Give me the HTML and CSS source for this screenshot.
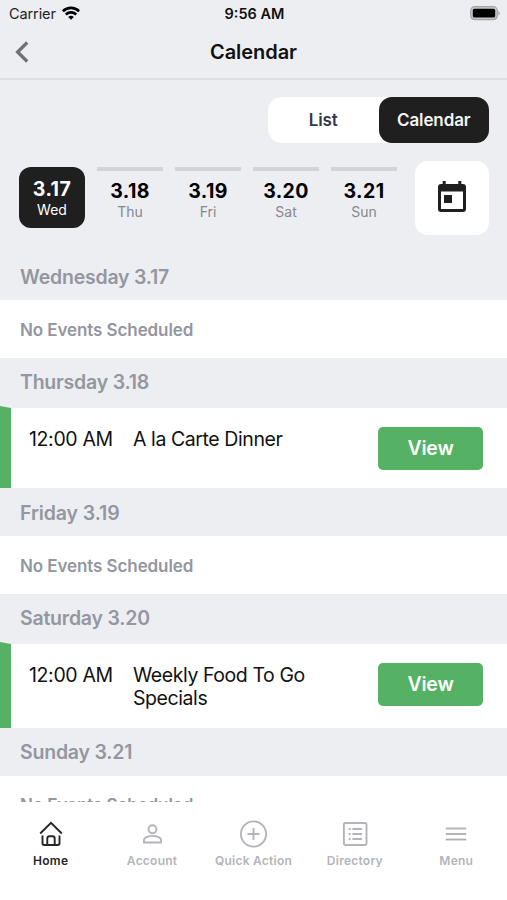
FILE: index.html
```html
<!DOCTYPE html>
<html lang="en">
<head>
<meta charset="utf-8">
<title>Calendar</title>
<link rel="stylesheet" href="styles.css">
</head>
<body>
<div class="app">
  <div class="status">
    <div class="status-left"><span class="carrier">Carrier</span>
      <svg class="wifi" width="18" height="14" viewBox="0 0 18 14" fill="none" stroke="#000" stroke-width="2.6"><path d="M.9 5.200a11.600 11.600 0 0 1 16.200 0"/><path d="M3.800 8.500a7.500 7.500 0 0 1 10.400 0"/><path d="M9 13.800 6.200 11a4 4 0 0 1 5.600 0Z" fill="#000" stroke="none"/></svg>
    </div>
    <span class="clock">9:56 AM</span>
    <svg class="battery" width="30" height="15" viewBox="0 0 30 15"><rect x=".7" y=".7" width="26.600" height="13" rx="4" fill="#c9c9cc" stroke="#a5a5a8" stroke-width="1.200"/><rect x="2.800" y="2.800" width="22.400" height="8.800" rx="1.600" fill="#000"/><path d="M28.400 5v4.600q1.400-.8 1.400-2.300T28.400 5Z" fill="#a5a5a8"/></svg>
  </div>
  <header class="titlebar">
    <svg class="back" width="14" height="22" viewBox="0 0 14 22" fill="none" stroke="#717174" stroke-width="3.300"><path d="M12.200 1.500 2.600 11l9.600 9.500"/></svg>
    <h1>Calendar</h1>
  </header>
  <div class="controls">
    <div class="segment"><span class="seg">List</span><span class="seg seg-on">Calendar</span></div>
    <div class="days">
      <div class="day day-on"><b>3.17</b><span>Wed</span></div>
      <div class="day"><b>3.18</b><span>Thu</span></div>
      <div class="day"><b>3.19</b><span>Fri</span></div>
      <div class="day"><b>3.20</b><span>Sat</span></div>
      <div class="day"><b>3.21</b><span>Sun</span></div>
      <div class="picker"><svg width="28" height="31" viewBox="0 0 28 31" fill="#1f1f20"><path fill-rule="evenodd" d="M3 3H4.700V0H7.700V3H20.300V0H23.300V3H25A3 3 0 0 1 28 6V28A3 3 0 0 1 25 31H3A3 3 0 0 1 0 28V6A3 3 0 0 1 3 3ZM3 10.500V28H25V10.500Z"/><path d="M6 14h8v8H6z"/></svg></div>
    </div>
  </div>
  <main class="agenda">
    <h2 class="h-wed">Wednesday 3.17</h2>
    <div class="empty">No Events Scheduled</div>
    <h2 class="h-thu">Thursday 3.18</h2>
    <div class="event"><span class="time">12:00 AM</span><span class="name">A la Carte Dinner</span><span class="view">View</span></div>
    <h2 class="h-fri">Friday 3.19</h2>
    <div class="empty">No Events Scheduled</div>
    <h2 class="h-sat">Saturday 3.20</h2>
    <div class="event event-tall"><span class="time">12:00 AM</span><span class="name">Weekly Food To Go Specials</span><span class="view">View</span></div>
    <h2 class="h-sun">Sunday 3.21</h2>
    <div class="empty empty-last">No Events Scheduled</div>
  </main>
  <nav class="tabs">
    <div class="tab tab-on"><svg width="28" height="28" viewBox="0 0 28 28"><path d="M3.200 13.500 14 2.900 24.800 13.500"/><path d="M5.500 15.500v7.800q0 1.700 1.700 1.700h13.600q1.700 0 1.700-1.700v-7.800M10.300 25v-6.400q0-2.300 2.300-2.300h2.800q2.300 0 2.300 2.300v6.400"/></svg><span>Home</span></div>
    <div class="tab"><svg width="28" height="28" viewBox="0 0 28 28"><circle cx="14.500" cy="9.200" r="4"/><path d="M6 22.500v-2.400c0-2.800 5.200-4.200 8.500-4.200s8.500 1.400 8.500 4.200v2.400Z"/></svg><span>Account</span></div>
    <div class="tab"><svg width="28" height="28" viewBox="0 0 28 28"><circle cx="14.500" cy="14" r="12.600"/><path d="M14.500 8v12M8.500 14h12"/></svg><span>Quick Action</span></div>
    <div class="tab"><svg width="28" height="28" viewBox="0 0 28 28"><rect x="2.900" y="3" width="22.600" height="22" rx="1.200"/><path d="M7.700 9h2M11.400 9h9.600M7.700 14h2M11.400 14h9.600M7.700 19h2M11.400 19h9.600"/></svg><span>Directory</span></div>
    <div class="tab"><svg width="28" height="28" viewBox="0 0 28 28" class="bold"><path d="M3.800 8.500h20.400M3.800 14h20.400M3.800 19.500h20.400"/></svg><span>Menu</span></div>
  </nav>
</div>
</body>
</html>
```
FILE: styles.css
```css
* { box-sizing: border-box; }
body { margin: 0; font-family: Inter, "Liberation Sans", sans-serif; color: #111; }
h1, h2 { margin: 0; }
.app { width: 507px; height: 900px; display: flex; flex-direction: column; overflow: hidden; background: #edeef2; }
.status { height: 28px; display: grid; grid-template-columns: 1fr auto 1fr; align-items: center; padding: 0 7px 0 9px; flex: none; }
.status-left { display: flex; align-items: center; gap: 6px; }
.carrier { font-size: 14.500px; color: #222; margin-top: -1px; letter-spacing: -.1px; }
.wifi { margin-top: -3px; }
.clock { font-size: 14.500px; font-weight: 600; color: #111; margin-top: -1px; }
.battery { justify-self: end; margin-top: -1px; }
.titlebar { height: 52px; flex: none; display: grid; grid-template-columns: 1fr auto 1fr; align-items: center; padding: 0 15px 3px; border-bottom: 2px solid #dfe0e3; }
.titlebar h1 { font-size: 20px; font-weight: 600; line-height: 24px; letter-spacing: -.05px; }
.controls { flex: none; height: 172px; padding: 17px 18px 0 19px; }
.segment { width: 221px; height: 46px; margin-left: auto; display: flex; background: #fff; border-radius: 14px; }
.seg { flex: 1; display: flex; align-items: center; justify-content: center; font-size: 17px; font-weight: 600; color: #35364a; border-radius: 13px; letter-spacing: -.1px; }
.seg-on { background: #1f1f20; color: #f4f4f4; }
.days { display: flex; gap: 12px; margin-top: 18px; }
.day { width: 66px; height: 61px; margin-top: 6px; border-top: 4px solid #d2d4d8; display: flex; flex-direction: column; align-items: center; padding-top: 9px; }
.day b { font-size: 19.500px; font-weight: 700; line-height: 22px; letter-spacing: .4px; color: #000; }
.day span { font-size: 14px; line-height: 20px; color: #87888d; }
.day-on { background: #1f1f20; border: 0; border-radius: 12px; padding-top: 11px; }
.day-on b, .day-on span { color: #fff; }
.picker { width: 74px; height: 74px; margin-left: 6px; border-radius: 13px; background: #fff; display: flex; align-items: center; justify-content: center; padding-bottom: 3px; }
.agenda { flex: 1; min-height: 0; overflow: hidden; }
.agenda h2 { padding: 0 0 0 20px; font-size: 19.500px; font-weight: 600; letter-spacing: -.22px; color: #9496a0; display: flex; align-items: center; height: 48px; }
.agenda .h-wed { padding-top: 2px; }
.agenda .h-fri { padding-top: 1px; letter-spacing: -.1px; }
.agenda .h-thu, .agenda .h-sat { height: 50px; padding-bottom: 2px; }
.empty { height: 58px; padding: 1px 0 0 20px; background: #fff; display: flex; align-items: center; font-size: 17px; font-weight: 600; letter-spacing: -.09px; color: #9496a0; }
.empty-last { padding-top: 0; }
.event { position: relative; height: 80px; background: #fff; display: flex; padding: 19px 24px 0 29px; font-size: 19.500px; line-height: 23px; color: #111; }
.event-tall { height: 84px; }
.event::before { content: ""; position: absolute; left: 0; top: -2px; bottom: 0; width: 11px; background: #55b264; clip-path: polygon(0 0, 100% 2px, 100% 100%, 0 100%); }
.time { width: 104px; margin-top: 1px; white-space: nowrap; letter-spacing: -.35px; }
.name { width: 200px; margin-top: 1px; letter-spacing: -.42px; }
.view { width: 105px; height: 43px; margin-left: auto; border-radius: 5px; background: #55b264; color: #fff; font-weight: 600; letter-spacing: -.2px; display: flex; align-items: center; justify-content: center; }
.tabs { height: 98px; flex: none; background: #fff; display: grid; grid-template-columns: repeat(5, 1fr); padding-top: 18px; }
.tab { display: flex; flex-direction: column; align-items: center; gap: 5px; color: #b3b5ba; font-size: 12px; font-weight: 600; line-height: 16px; letter-spacing: .25px; white-space: nowrap; }
.tab svg { fill: none; stroke: currentColor; stroke-width: 1.9; }
.tab .bold { stroke-width: 2.1; }
.tab-on { color: #252527; }
```
